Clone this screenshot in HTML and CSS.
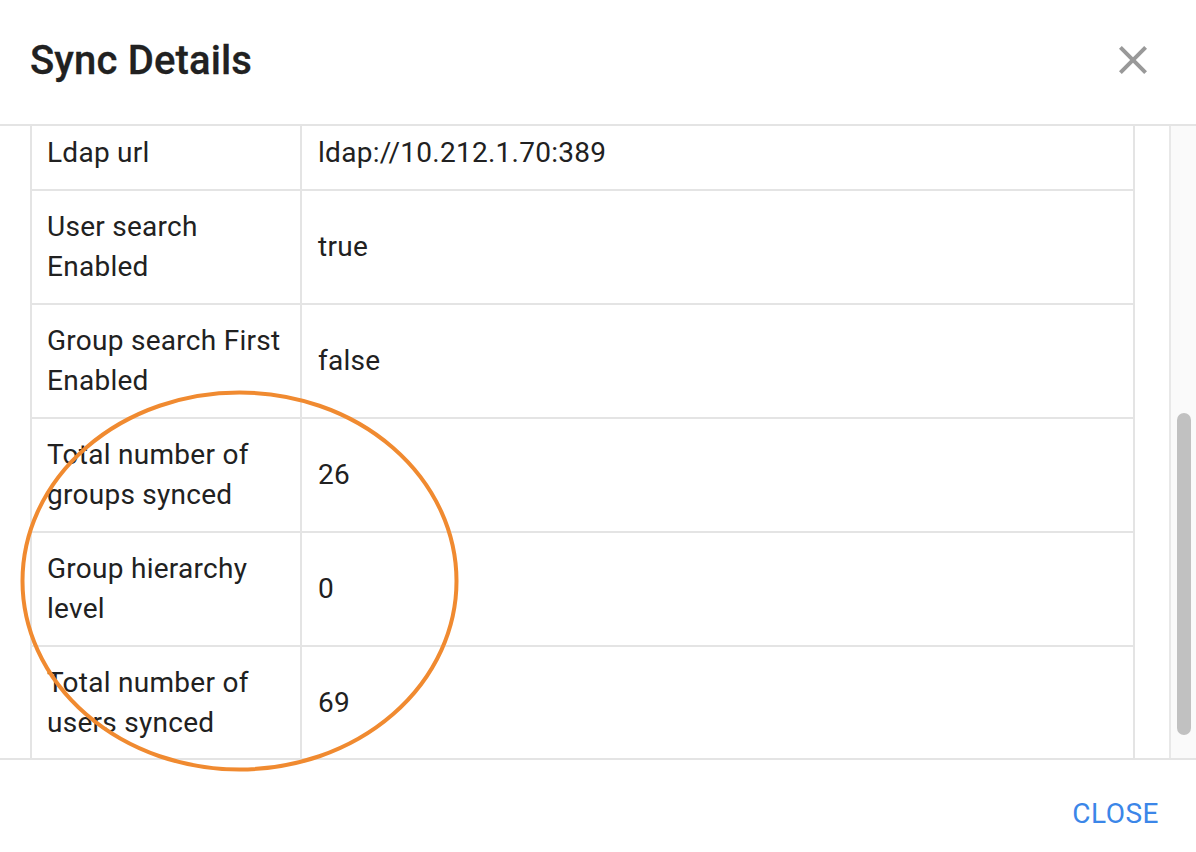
FILE: index.html
```html
<!DOCTYPE html>
<html>
<head>
<meta charset="utf-8">
<link rel="stylesheet" href="styles.css">
</head>
<body>
<div class="dialog">
  <header class="header">
    <h2 class="title">Sync Details</h2>
    <button class="icon-btn" aria-label="close">
      <svg viewBox="0 0 24 24" width="48" height="48"><path d="M19 6.41 17.59 5 12 10.59 6.41 5 5 6.41 10.59 12 5 17.59 6.41 19 12 13.41 17.59 19 19 17.59 13.41 12z" fill="#999999"/></svg>
    </button>
  </header>
  <div class="body">
    <div class="content">
      <table class="details">
        <tr><td class="key">Ldap url</td><td>ldap://10.212.1.70:389</td></tr>
        <tr><td class="key">User search<br>Enabled</td><td>true</td></tr>
        <tr><td class="key">Group search First<br>Enabled</td><td>false</td></tr>
        <tr><td class="key">Total number of<br>groups synced</td><td>26</td></tr>
        <tr><td class="key">Group hierarchy<br>level</td><td>0</td></tr>
        <tr><td class="key">Total number of<br>users synced</td><td>69</td></tr>
      </table>
    </div>
    <div class="scrollbar"><div class="thumb"></div></div>
  </div>
  <footer class="footer">
    <button class="text-btn">CLOSE</button>
  </footer>
</div>
<svg class="annotation" width="1196" height="852" viewBox="0 0 1196 852">
  <ellipse cx="239.5" cy="581" rx="217" ry="188.5" fill="none" stroke="#f08a30" stroke-width="4"/>
</svg>
</body>
</html>
```
FILE: styles.css
```css
html, body {
  margin: 0;
  padding: 0;
  background: #ffffff;
}
body {
  font-family: Roboto, "Liberation Sans", sans-serif;
  color: #212121;
  width: 1196px;
  height: 852px;
  overflow: hidden;
  position: relative;
}
.dialog {
  display: flex;
  flex-direction: column;
  height: 852px;
}
.header {
  height: 124px;
  border-bottom: 2px solid #e4e4e4;
  display: flex;
  align-items: center;
  justify-content: space-between;
  padding: 0 39px 0 30px;
  box-sizing: content-box;
}
.title {
  margin: 0;
  font-size: 40px;
  font-weight: 500;
  line-height: 48px;
  margin-top: -3px;
  letter-spacing: 0.15px;
  color: #212121;
  -webkit-text-stroke: 0.3px #212121;
}
.icon-btn {
  border: 0;
  background: none;
  padding: 0;
  width: 48px;
  height: 48px;
  margin-top: -4px;
  display: flex;
}
.body {
  height: 632px;
  display: flex;
  overflow: hidden;
}
.content {
  flex: 1;
  padding: 0 32px 0 30px;
  overflow: hidden;
}
.details {
  width: 1105px;
  border-collapse: separate;
  border-spacing: 0;
  border-left: 2px solid #e4e4e4;
  border-top: 2px solid #e4e4e4;
  margin-top: -11px;
  font-size: 28px;
  line-height: 40px;
  letter-spacing: 0.27px;
}
.details td {
  border-right: 2px solid #e4e4e4;
  border-bottom: 2px solid #e4e4e4;
  padding: 16px 16px 16px 16px;
  vertical-align: middle;
  white-space: nowrap;
}
.details td.key {
  width: 237px;
  padding-left: 15px;
}
.scrollbar {
  width: 27px;
  border-left: 2px solid #e8e8e8;
  background: #fafafa;
  padding: 0 5px 0 6px;
  box-sizing: border-box;
}
.thumb {
  margin-top: 287px;
  height: 322px;
  border-radius: 8px;
  background: #c1c1c1;
}
.footer {
  flex: 1;
  border-top: 2px solid #e4e4e4;
  display: flex;
  justify-content: flex-end;
  align-items: center;
  padding: 16px 37px 0 0;
}
.text-btn {
  border: 0;
  background: none;
  padding: 0;
  font-family: Roboto, "Liberation Sans", sans-serif;
  font-size: 28px;
  font-weight: 400;
  letter-spacing: 0.5px;
  color: #3b86e8;
  line-height: 40px;
}
.annotation {
  position: absolute;
  left: 0;
  top: 0;
  pointer-events: none;
}
```
